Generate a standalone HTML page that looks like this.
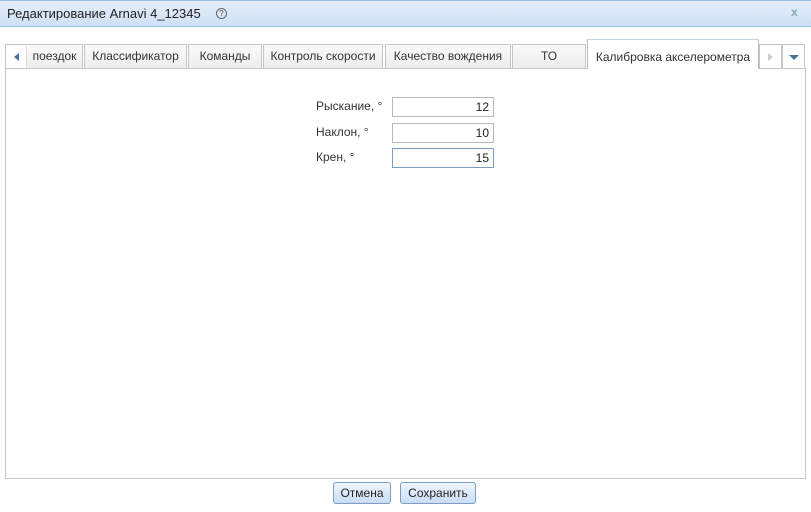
<!DOCTYPE html>
<html><head><style>
body{margin:0;width:811px;height:512px;background:#fff;font-family:"Liberation Sans",sans-serif;font-size:12px;color:#222;position:relative;overflow:hidden}
.a{position:absolute;box-sizing:border-box}
.title{left:0;top:0;width:811px;height:27px;background:linear-gradient(#e4eefa,#cfe0f5);border-bottom:1px solid #99bbe8;border-top:1px solid #99bbe8}
.tab{top:44px;height:25px;border:1px solid #c6c6c6;border-bottom:none;background:linear-gradient(#fafafa,#ececec);text-align:center;line-height:22px;color:#333;white-space:nowrap;overflow:hidden}
.inp{left:392px;width:102px;height:20px;border:1px solid #b5b8c8;text-align:right;padding-right:4px;line-height:18px}
.lbl{left:316px;line-height:18px;color:#333}
.btn{top:482px;height:22px;border:1px solid #7a9ec6;border-radius:3px;background:linear-gradient(#eef5fd,#c9ddf5);line-height:20px;text-align:center}
</style></head><body>
<div class="a title"></div>
<div class="a" style="left:7px;top:6px;font-size:13px;color:#222">Редактирование Arnavi 4_12345</div>
<div class="a" style="left:216px;top:8px;width:11px;height:11px;border:1px solid #666;border-radius:50%;font-size:8px;line-height:10px;text-align:center;color:#555">?</div>
<div class="a" style="left:791px;top:5px;color:#8aa;font-size:12px;font-weight:bold">x</div>

<div class="a tab" style="left:5px;width:22px;background:#fff;border-right:none"><span style="display:inline-block;margin-top:8px;width:0;height:0;border-top:4px solid transparent;border-bottom:4px solid transparent;border-right:5px solid #4a6f9a"></span></div>
<div class="a tab" style="left:26px;width:57px;border-left:1px solid #ddd">поездок</div>
<div class="a tab" style="left:84px;width:103px">Классификатор</div>
<div class="a tab" style="left:188px;width:74px">Команды</div>
<div class="a tab" style="left:263px;width:120px">Контроль скорости</div>
<div class="a tab" style="left:385px;width:126px">Качество вождения</div>
<div class="a tab" style="left:512px;width:74px">ТО</div>
<div class="a tab" style="left:587px;top:39px;height:30px;width:172px;background:#fff;line-height:34px;border-color:#bbb;border-top:1px solid #c6d3e3">Калибровка акселерометра</div>
<div class="a tab" style="left:759px;width:23px;background:#fff"><span style="display:inline-block;margin-top:8px;width:0;height:0;border-top:4px solid transparent;border-bottom:4px solid transparent;border-left:5px solid #ccc"></span></div>
<div class="a tab" style="left:782px;width:23px;background:#fff"><span style="display:inline-block;margin-top:10px;width:0;height:0;border-left:5px solid transparent;border-right:5px solid transparent;border-top:5px solid #4a6f9a"></span></div>

<div class="a" style="left:5px;top:68px;width:801px;height:411px;border:1px solid #c6c6c6"></div>
<div class="a" style="left:588px;top:68px;width:170px;height:1px;background:#fff"></div>

<div class="a lbl" style="top:97px">Рыскание, °</div>
<div class="a inp" style="top:97px">12</div>
<div class="a lbl" style="top:123px">Наклон, °</div>
<div class="a inp" style="top:123px">10</div>
<div class="a lbl" style="top:148px">Крен, °</div>
<div class="a inp" style="top:148px;border-color:#7a9ec6">15</div>

<div class="a btn" style="left:333px;width:58px">Отмена</div>
<div class="a btn" style="left:400px;width:76px">Сохранить</div>
</body></html>
